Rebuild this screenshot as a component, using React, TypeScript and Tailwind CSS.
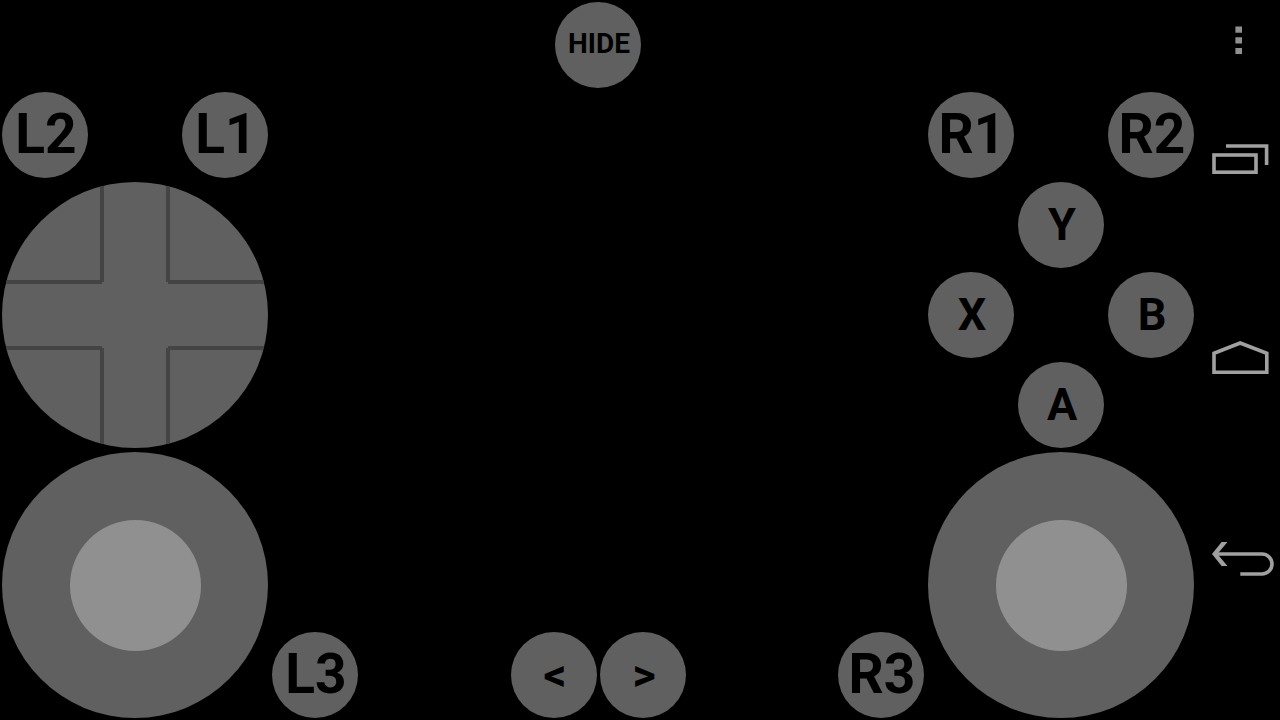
import type { ReactNode } from "react";

const labelSizes = {
  sm: "text-[28px]",
  md: "text-[45px]",
  lg: "text-[55px]",
};

type PadButtonProps = {
  label: string;
  size: keyof typeof labelSizes;
  place?: string;
};

function PadButton({ label, size, place = "" }: PadButtonProps) {
  return (
    <button
      type="button"
      className={`flex size-[86px] items-center justify-center rounded-full bg-[#606060] pb-0.5 pl-0.5 leading-none font-bold text-black ${labelSizes[size]} ${place}`}
    >
      {label}
    </button>
  );
}

function Stick({ label, place }: { label: string; place: string }) {
  return (
    <button
      type="button"
      aria-label={label}
      className={`flex size-[266px] items-center justify-center rounded-full bg-[#606060] pt-px pl-px ${place}`}
    >
      <span className="size-[131px] rounded-full bg-[#909090]" />
    </button>
  );
}

function DPad({ place }: { place: string }) {
  return (
    <button
      type="button"
      aria-label="Directional pad"
      className={`size-[266px] overflow-hidden rounded-full bg-[#606060] ${place}`}
    >
      <svg viewBox="0 0 266 266" className="size-full" fill="none" stroke="#444444" strokeWidth="4">
        <path d="M100 0V100M0 100H100M166 0V100M166 100H266M0 166H100M100 166V266M166 166H266M166 166V266" />
      </svg>
    </button>
  );
}

function NavButton({ label, children }: { label: string; children: ReactNode }) {
  return (
    <button type="button" aria-label={label} className="h-20 w-full">
      <svg viewBox="0 0 84 80" className="size-full" fill="none" stroke="#a0a0a0" strokeWidth="3.6">
        {children}
      </svg>
    </button>
  );
}

export default function App() {
  return (
    <div className="flex min-h-screen bg-black font-['Roboto',sans-serif]">
      <main className="flex flex-1 justify-between">
        <section
          aria-label="Left controls"
          className="grid auto-rows-[90px] grid-cols-[repeat(4,90px)] content-end place-items-center"
        >
          <PadButton label="L2" size="lg" place="col-start-1 row-start-2" />
          <PadButton label="L1" size="lg" place="col-start-3 row-start-2" />
          <DPad place="col-span-3 col-start-1 row-span-3 row-start-3" />
          <Stick label="Left stick" place="col-span-3 col-start-1 row-span-3 row-start-6" />
          <PadButton label="L3" size="lg" place="col-start-4 row-start-8" />
        </section>

        <section aria-label="Center controls" className="flex flex-col items-center justify-between py-0.5">
          <PadButton label="HIDE" size="sm" />
          <div className="flex gap-[3px] pl-px">
            <PadButton label="<" size="md" />
            <PadButton label=">" size="md" />
          </div>
        </section>

        <section
          aria-label="Right controls"
          className="grid auto-rows-[90px] grid-cols-[repeat(4,90px)] content-end place-items-center"
        >
          <PadButton label="R1" size="lg" place="col-start-2 row-start-2" />
          <PadButton label="R2" size="lg" place="col-start-4 row-start-2" />
          <PadButton label="Y" size="md" place="col-start-3 row-start-3" />
          <PadButton label="X" size="md" place="col-start-2 row-start-4" />
          <PadButton label="B" size="md" place="col-start-4 row-start-4" />
          <PadButton label="A" size="md" place="col-start-3 row-start-5" />
          <Stick label="Right stick" place="col-span-3 col-start-2 row-span-3 row-start-6" />
          <PadButton label="R3" size="lg" place="col-start-1 row-start-8" />
        </section>
      </main>

      <nav aria-label="System" className="flex w-[84px] flex-col gap-[120px]">
        <div className="flex flex-col gap-10">
          <NavButton label="Menu">
            <path
              stroke="none"
              fill="#909090"
              d="M39.4 26.5h6.6v6.2h-6.6zM39.4 37.3h6.6v6.2h-6.6zM39.4 48h6.6v6h-6.6z"
            />
          </NavButton>
          <NavButton label="Recent apps">
            <path d="M30 26H70.6V45" />
            <rect x="18" y="35" width="42" height="17.2" />
          </NavButton>
        </div>
        <NavButton label="Home">
          <path d="M18 52.2V33.2L44.2 23L70.8 33.2V52.2Z" />
        </NavButton>
        <NavButton label="Back">
          <path d="M19 34H66A10 10 0 0 1 66 54H44.3" />
          <path stroke="none" fill="#a0a0a0" d="M16 34L25.6 22H31.5L21.4 34L31.5 46H25.6Z" />
        </NavButton>
      </nav>
    </div>
  );
}
